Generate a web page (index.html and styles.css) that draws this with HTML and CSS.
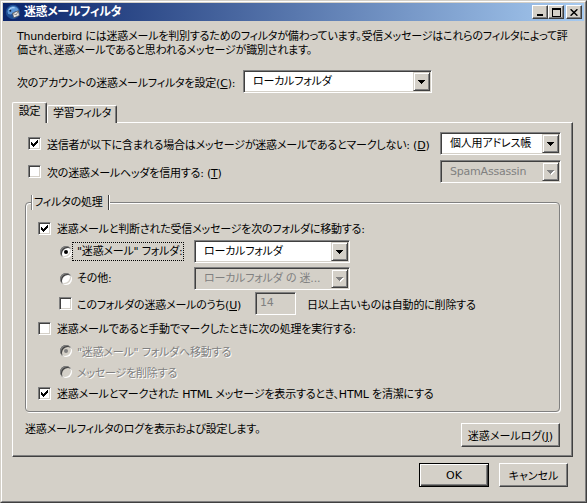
FILE: index.html
```html
<!DOCTYPE html>
<html lang="ja">
<head>
<meta charset="utf-8">
<title>迷惑メールフィルタ</title>
<link rel="stylesheet" href="styles.css">
</head>
<body>
<div class="window">
  <div class="frame">
    <div class="titlebar">
      <svg class="appicon" viewBox="0 0 16 16" width="16" height="16">
        <circle cx="8" cy="8" r="7.2" fill="#1f4f94"/>
        <path d="M2.5 7.5C2.8 4 5.5 1.8 9 2.2c2.5.3 4.3 2 4.8 4.3L9.5 7.8 6 10.5 3.2 10z" fill="#5d97d8"/>
        <path d="M4 6c1.2-2 3.5-2.8 5.6-2.2" stroke="#a9d0f5" stroke-width="1.2" fill="none"/>
        <path d="M7.5 9.2l5.8-2.4 1.1 4.6-5.6 2.4z" fill="#e6e6e6" stroke="#4a4a4a" stroke-width=".6"/>
        <path d="M7.6 9.3l3.6 1.6 2.1-4" stroke="#4a4a4a" stroke-width=".6" fill="none"/>
        <circle cx="5.3" cy="6.8" r="1" fill="#0b1f40"/>
      </svg>
      <span class="title">迷惑メールフィルタ</span>
      <div class="tbtns">
        <span class="tbtn"><svg width="8" height="7" viewBox="0 0 8 7"><rect x="1" y="5" width="6" height="2"/></svg></span>
        <span class="tbtn"><svg width="9" height="9" viewBox="0 0 9 9"><path fill-rule="evenodd" d="M0 0h9v9H0zM1 2h7v6H1z"/></svg></span>
        <span class="tbtn tbtn-close"><svg width="8" height="7" viewBox="0 0 8 7"><path d="M0.6 0.3L7.4 6.7M7.4 0.3L0.6 6.7" stroke="#000" stroke-width="1.5"/></svg></span>
      </div>
    </div>

    <div class="content">
      <p class="intro">Thunderbird には迷惑メールを判別するためのフィルタが備わっています。受信メッセージはこれらのフィルタによって評<br>価され、迷惑メールであると思われるメッセージが識別されます。</p>

      <div class="account">
        <span class="account-label">次のアカウントの迷惑メールフィルタを設定(<u>C</u>):</span>
        <div class="dd dd-account">
          <span class="dd-text">ローカルフォルダ</span>
          <span class="dd-btn"><svg class="arrow" width="7" height="4" viewBox="0 0 7 4"><path d="M0 0h7v1h-1v1h-1v1h-1v1h-1v-1h-1v-1h-1v-1h-1z"/></svg></span>
        </div>
      </div>

      <div class="tabs">
        <div class="tab tab-sel">設定</div>
        <div class="tab">学習フィルタ</div>
      </div>

      <div class="panel">
        <div class="prow">
          <span class="cb"><svg width="7" height="7" viewBox="0 0 7 7"><path d="M6 0h1v3h-1zM5 1h1v3h-1zM4 2h1v3h-1zM3 3h1v3h-1zM2 4h1v3h-1zM1 3h1v3h-1zM0 2h1v3h-1z"/></svg></span>
          <span class="lbl">送信者が以下に含まれる場合はメッセージが迷惑メールであるとマークしない: (<u>D</u>)</span>
          <div class="dd dd-small">
            <span class="dd-text">個人用アドレス帳</span>
            <span class="dd-btn"><svg class="arrow" width="7" height="4" viewBox="0 0 7 4"><path d="M0 0h7v1h-1v1h-1v1h-1v1h-1v-1h-1v-1h-1v-1h-1z"/></svg></span>
          </div>
        </div>
        <div class="prow prow-2">
          <span class="cb"></span>
          <span class="lbl">次の迷惑メールヘッダを信用する: (<u>T</u>)</span>
          <div class="dd dd-small dd-disabled">
            <span class="dd-text">SpamAssassin</span>
            <span class="dd-btn"><svg class="arrow" width="7" height="4" viewBox="0 0 7 4"><path d="M0 0h7v1h-1v1h-1v1h-1v1h-1v-1h-1v-1h-1v-1h-1z"/></svg></span>
          </div>
        </div>

        <div class="group">
          <div class="caption">フィルタの処理</div>
          <div class="grow g1">
            <span class="cb"><svg width="7" height="7" viewBox="0 0 7 7"><path d="M6 0h1v3h-1zM5 1h1v3h-1zM4 2h1v3h-1zM3 3h1v3h-1zM2 4h1v3h-1zM1 3h1v3h-1zM0 2h1v3h-1z"/></svg></span>
            <span class="lbl">迷惑メールと判断された受信メッセージを次のフォルダに移動する:</span>
          </div>
          <div class="grow g2 sub">
            <span class="rb rb-on"></span>
            <span class="rlbl focus">"迷惑メール" フォルダ:</span>
            <div class="dd dd-folder">
              <span class="dd-text">ローカルフォルダ</span>
              <span class="dd-btn"><svg class="arrow" width="7" height="4" viewBox="0 0 7 4"><path d="M0 0h7v1h-1v1h-1v1h-1v1h-1v-1h-1v-1h-1v-1h-1z"/></svg></span>
            </div>
          </div>
          <div class="grow g3 sub">
            <span class="rb"></span>
            <span class="rlbl">その他:</span>
            <div class="dd dd-folder dd-disabled">
              <span class="dd-text">ローカルフォルダ の 迷...</span>
              <span class="dd-btn"><svg class="arrow" width="7" height="4" viewBox="0 0 7 4"><path d="M0 0h7v1h-1v1h-1v1h-1v1h-1v-1h-1v-1h-1v-1h-1z"/></svg></span>
            </div>
          </div>
          <div class="grow g4 subcb">
            <span class="cb"></span>
            <span class="lbl days-label">このフォルダの迷惑メールのうち(<u>U</u>)</span>
            <span class="tb">14</span>
            <span class="lbl days-after">日以上古いものは自動的に削除する</span>
          </div>
          <div class="grow g5">
            <span class="cb"></span>
            <span class="lbl">迷惑メールであると手動でマークしたときに次の処理を実行する:</span>
          </div>
          <div class="grow g6 sub">
            <span class="rb rb-on rb-disabled"></span>
            <span class="lbl dis">"迷惑メール" フォルダへ移動する</span>
          </div>
          <div class="grow g7 sub">
            <span class="rb rb-disabled"></span>
            <span class="lbl dis">メッセージを削除する</span>
          </div>
          <div class="grow g8">
            <span class="cb"><svg width="7" height="7" viewBox="0 0 7 7"><path d="M6 0h1v3h-1zM5 1h1v3h-1zM4 2h1v3h-1zM3 3h1v3h-1zM2 4h1v3h-1zM1 3h1v3h-1zM0 2h1v3h-1z"/></svg></span>
            <span class="lbl">迷惑メールとマークされた HTML メッセージを表示するとき、HTML を清潔にする</span>
          </div>
        </div>

        <div class="logrow">
          <span class="logtext">迷惑メールフィルタのログを表示および設定します。</span>
          <button class="btn btn-log">迷惑メールログ(<u>J</u>)</button>
        </div>
      </div>

      <div class="dlg-buttons">
        <button class="btn btn-default btn-ok">OK</button>
        <button class="btn btn-cancel">キャンセル</button>
      </div>
    </div>
  </div>
</div>
</body>
</html>
```
FILE: styles.css
```css
* { box-sizing: border-box; }
html, body { margin: 0; padding: 0; }
body {
  background: #D4D0C8;
  font-family: "DejaVu Sans", "Noto Sans CJK JP", sans-serif;
  font-size: 11px;
  letter-spacing: -0.2px;
  color: #000;
  font-feature-settings: "palt";
}
u { text-decoration: underline; text-underline-offset: 1px; }

.window {
  width: 587px;
  height: 503px;
  border: 1px solid;
  border-color: #D4D0C8 #404040 #404040 #D4D0C8;
  background: #D4D0C8;
}
.frame {
  height: 100%;
  border: 1px solid;
  border-color: #fff #808080 #808080 #fff;
  padding: 1px;
}

/* title bar */
.titlebar {
  height: 18px;
  display: flex;
  align-items: center;
  padding-left: 2px;
  background: linear-gradient(to right, #0A246A, #A6CAF0);
}
.appicon { flex: none; }
.title {
  margin-left: 3px;
  color: #fff;
  font-weight: bold;
  font-size: 12px;
  letter-spacing: -0.4px;
  line-height: 18px;
  white-space: nowrap;
}
.tbtns { margin-left: auto; display: flex; padding-right: 2px; }
.tbtn {
  width: 16px;
  height: 14px;
  display: flex;
  align-items: center;
  justify-content: center;
  background: #D4D0C8;
  border: 1px solid;
  border-color: #fff #404040 #404040 #fff;
  box-shadow: inset -1px -1px 0 #808080;
}
.tbtn svg { display: block; }
.tbtn-close { margin-left: 2px; }

/* content */
.content { padding: 9px 11px 0 9px; }
.intro {
  margin: 0 0 0 5px;
  line-height: 14px;
  white-space: nowrap;
}
.account {
  margin-top: 12px;
  padding-left: 5px;
  height: 23px;
  display: flex;
  align-items: center;
}
.account-label { width: 226px; white-space: nowrap; }

/* dropdowns */
.dd {
  display: flex;
  height: 23px;
  background: #fff;
  border: 1px solid;
  border-color: #808080 #fff #fff #808080;
  padding: 1px;
  box-shadow: inset 1px 1px 0 #404040, inset -1px -1px 0 #D4D0C8;
  flex: none;
}
.dd-text {
  flex: 1;
  padding-left: 8px;
  line-height: 19px;
  white-space: nowrap;
  overflow: hidden;
}
.dd-btn {
  width: 17px;
  height: 19px;
  flex: none;
  display: flex;
  align-items: center;
  justify-content: center;
  background: #D4D0C8;
  border: 1px solid;
  border-color: #D4D0C8 #404040 #404040 #D4D0C8;
  box-shadow: inset 1px 1px 0 #fff, inset -1px -1px 0 #808080;
}
.arrow { display: block; fill: #000; }
.dd-account { width: 189px; }
.dd-small { width: 121px; margin-left: auto; }
.dd-folder { width: 156px; margin-left: 10px; }
.dd-disabled { background: #D4D0C8; }
.dd-disabled .dd-text { color: #808080; }
.dd-disabled .arrow { fill: #808080; filter: drop-shadow(1px 1px 0 #fff); }

/* tabs */
.tabs {
  margin-top: 9px;
  margin-bottom: -1px;
  height: 21px;
  display: flex;
  align-items: flex-end;
}
.tab {
  height: 18px;
  width: 70px;
  text-align: center;
  line-height: 15px;
  background: #D4D0C8;
  border-top: 1px solid #fff;
  border-left: 1px solid #fff;
  border-right: 1px solid #404040;
  border-top-left-radius: 2px;
  border-top-right-radius: 2px;
  box-shadow: inset -1px 0 0 #808080;
  white-space: nowrap;
}
.tab-sel {
  position: relative;
  z-index: 1;
  width: 35px;
  height: 21px;
  line-height: 17px;
}

/* panel */
.panel {
  height: 335px;
  border: 1px solid;
  border-color: #fff #404040 #404040 #fff;
  box-shadow: inset -1px -1px 0 #808080;
  padding: 9px 11px 0 12px;
}
.prow {
  display: flex;
  align-items: center;
  height: 23px;
  padding-left: 3px;
}
.prow-2 { margin-top: 5px; }
.lbl { white-space: nowrap; }
.dis { color: #808080; text-shadow: 1px 1px 0 #fff; }

/* checkbox */
.cb {
  width: 13px;
  height: 13px;
  flex: none;
  margin-right: 6px;
  display: flex;
  align-items: center;
  justify-content: center;
  background: #fff;
  border: 1px solid;
  border-color: #808080 #fff #fff #808080;
  box-shadow: inset 1px 1px 0 #404040, inset -1px -1px 0 #D4D0C8;
}
.cb svg { display: block; fill: #000; }

/* radio */
.rb {
  width: 12px;
  height: 12px;
  flex: none;
  border-radius: 50%;
  display: flex;
  align-items: center;
  justify-content: center;
  background: #fff;
  box-shadow: inset 1px 1px 0 #808080, inset -1px -1px 0 #fff,
              inset 2px 2px 0 #404040, inset -2px -2px 0 #D4D0C8;
}
.rb-on::after {
  content: "";
  width: 4px;
  height: 4px;
  border-radius: 50%;
  background: #000;
}
.rb-disabled { background: #D4D0C8; }
.rb-disabled.rb-on::after { background: #808080; }

/* group box */
.group {
  margin-top: 19px;
  margin-right: 1px;
  border: 1px solid #808080;
  border-radius: 4px;
  box-shadow: inset 1px 1px 0 #fff, 1px 1px 0 #fff;
  padding: 0 0 8px 12px;
}
.caption {
  width: fit-content;
  margin: -8px 0 0 -7px;
  padding: 0 5px 0 2px;
  height: 15px;
  line-height: 15px;
  background: #D4D0C8;
  border-left: 1px solid #808080;
  border-right: 1px solid #404040;
  box-shadow: 1px 0 0 #fff, inset 1px 0 0 #fff;
  white-space: nowrap;
}
.grow {
  display: flex;
  align-items: center;
  height: 20px;
}
.g1 { margin-top: 8px; }
.g2, .g3, .g4 { height: 23px; }
.g2 { margin-top: 2px; }
.g3 { margin-top: 4px; }
.g4 { margin-top: 2px; }
.g5 { margin-top: 3px; }
.g6 { margin-top: 3px; }
.g7 { margin-top: 1px; }
.g8 { margin-top: 1px; }
.sub { padding-left: 22px; }
.sub .lbl { margin-left: 5px; }
.subcb { padding-left: 21px; }
.subcb .cb { margin-right: 5px; }
.rlbl {
  width: 112px;
  height: 19px;
  line-height: 17px;
  padding-left: 4px;
  border: 1px dotted transparent;
  white-space: nowrap;
}
.rlbl.focus { border-color: #000; }
.days-label { width: 178px; }
.tb {
  width: 41px;
  height: 23px;
  flex: none;
  padding-left: 4px;
  line-height: 19px;
  color: #808080;
  background: #D4D0C8;
  border: 1px solid;
  border-color: #808080 #fff #fff #808080;
  box-shadow: inset 1px 1px 0 #404040, inset -1px -1px 0 #D4D0C8;
}
.days-after { margin-left: 11px; }

/* log row */
.logrow {
  margin-top: 11px;
  margin-right: 1px;
  height: 24px;
  display: flex;
  align-items: flex-start;
}
.logtext { line-height: 14px; white-space: nowrap; }

/* buttons */
.btn {
  font: inherit;
  color: #000;
  height: 24px;
  padding: 0;
  margin: 0;
  background: #D4D0C8;
  border: 1px solid;
  border-color: #fff #404040 #404040 #fff;
  box-shadow: inset -1px -1px 0 #808080;
  white-space: nowrap;
  flex: none;
}
.btn-log { width: 99px; margin-left: auto; }
.btn-default {
  border: 1px solid #000;
  box-shadow: inset 1px 1px 0 #fff, inset -1px -1px 0 #404040, inset -2px -2px 0 #808080;
}
.dlg-buttons {
  margin-top: 6px;
  padding-right: 5px;
  display: flex;
  justify-content: flex-end;
  gap: 10px;
}
.btn-ok { width: 70px; }
.btn-cancel { width: 69px; }
```
